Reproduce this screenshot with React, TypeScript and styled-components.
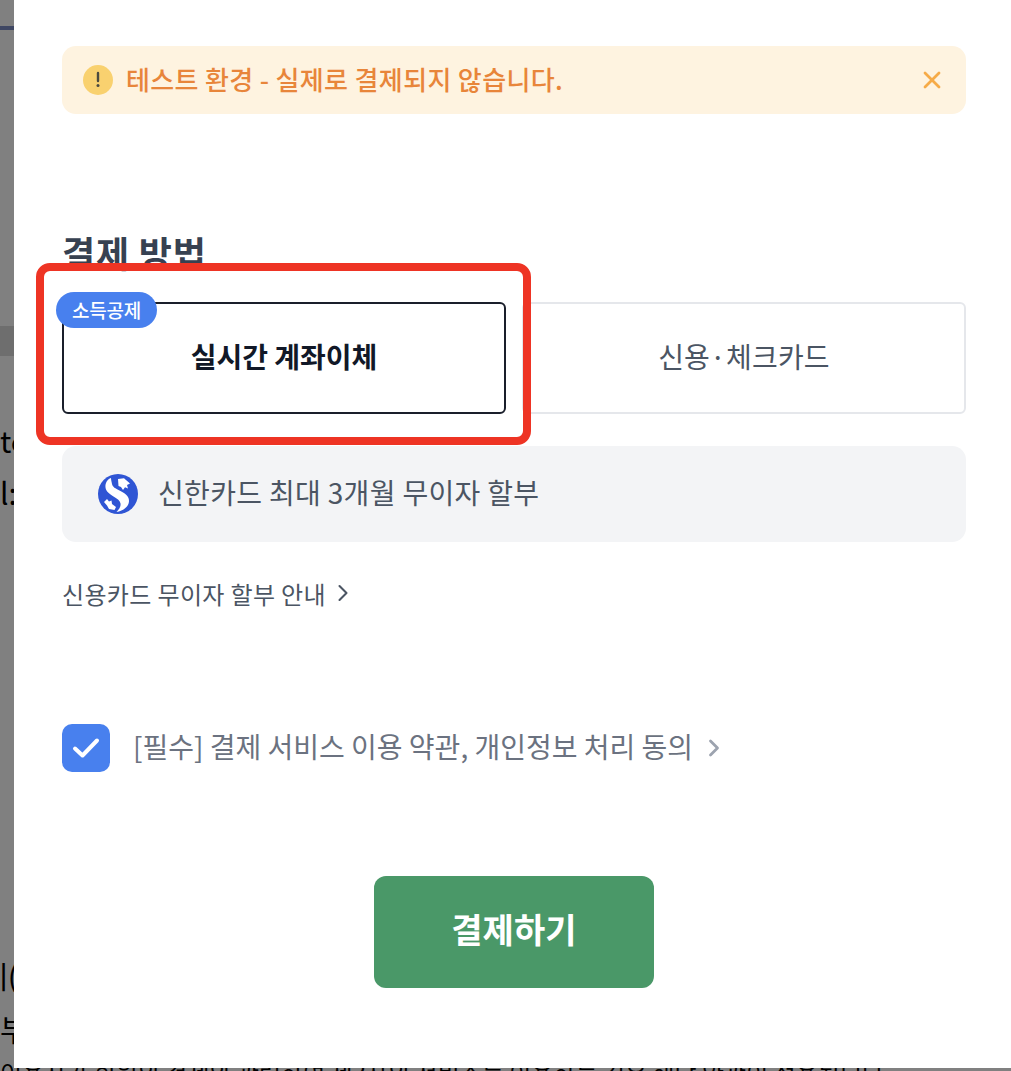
import React from 'react'
import styled, { createGlobalStyle } from 'styled-components'
import { ChevronRight, X } from 'lucide-react'

const GlobalStyle = createGlobalStyle`
  html, body {
    margin: 0;
    padding: 0;
    background: #808080;
  }
  * {
    box-sizing: border-box;
  }
`

const Page = styled.div`
  position: relative;
  width: 1011px;
  height: 1071px;
  overflow: hidden;
  background: #808080;
  font-family: 'Noto Sans CJK KR', 'Noto Sans', sans-serif;
`

const Backdrop = styled.div`
  display: flex;
  flex-direction: column;
  width: 1011px;
  height: 1071px;
  color: #000;
  font-size: 30px;
`

const BackdropRule = styled.div`
  flex: none;
  height: 4px;
  margin-top: 26px;
  background: #3f4763;
`

const BackdropBand = styled.div`
  flex: none;
  height: 30px;
  margin-top: 296px;
  background: #6e6e6e;
`

const BackdropLine = styled.div<{ $gap: number; $tail?: boolean }>`
  flex: none;
  width: ${p => (p.$tail ? 18 : 40)}px;
  height: 34px;
  display: flex;
  justify-content: ${p => (p.$tail ? 'flex-end' : 'flex-start')};
  overflow: hidden;
  line-height: 34px;
  margin-top: ${p => p.$gap}px;
  white-space: nowrap;
`

const BackdropFoot = styled.div`
  flex: none;
  line-height: 24px;
  margin-top: 15px;
  font-size: 24px;
  white-space: nowrap;
`

const Sheet = styled.div`
  position: absolute;
  top: 0;
  left: 14px;
  width: 997px;
  height: 1068px;
  display: flex;
  flex-direction: column;
  padding: 46px 45px 0 48px;
  background: #fff;
`

const Alert = styled.div`
  display: flex;
  align-items: center;
  height: 68px;
  padding: 0 20px 0 21px;
  border-radius: 14px;
  background: #fef3e0;
`

const AlertDot = styled.div`
  width: 30px;
  height: 30px;
  flex: none;
  display: flex;
  align-items: center;
  justify-content: center;
  border-radius: 50%;
  background: #f9d16f;
`

const AlertText = styled.div`
  flex: 1;
  margin-left: 13px;
  padding-bottom: 2px;
  color: #e8853a;
  font-size: 26px;
  font-weight: 500;
  letter-spacing: 0.35px;
  line-height: 34px;
`

const AlertClose = styled.div`
  display: flex;
  color: #f6ab48;
`

const Heading = styled.h2`
  margin: 114px 0 0;
  height: 52px;
  color: #374151;
  font-size: 36px;
  font-weight: 700;
  line-height: 48px;
  letter-spacing: 0.8px;
`

const Tabs = styled.div`
  display: flex;
  gap: 16px;
  margin-top: 22px;
  height: 112px;
`

const Tab = styled.div<{ $active?: boolean }>`
  position: relative;
  display: flex;
  align-items: center;
  justify-content: center;
  flex: 1;
  padding-bottom: 4px;
  border: 2px solid ${p => (p.$active ? '#1a1f2b' : '#e5e7eb')};
  border-radius: 6px;
  color: ${p => (p.$active ? '#111827' : '#4b5563')};
  font-size: 28px;
  font-weight: ${p => (p.$active ? 700 : 400)};
  letter-spacing: ${p => (p.$active ? 0 : 0.2)}px;
`

const Badge = styled.span`
  position: absolute;
  top: -12px;
  left: -8px;
  height: 36px;
  width: 101px;
  display: flex;
  align-items: center;
  justify-content: center;
  padding-bottom: 2px;
  border-radius: 18px;
  background: #4880ee;
  color: #fff;
  font-size: 19px;
  font-weight: 500;
  letter-spacing: -0.2px;
`

const Promo = styled.div`
  display: flex;
  align-items: center;
  height: 96px;
  margin-top: 32px;
  padding: 0 36px;
  border-radius: 14px;
  background: #f3f4f6;
  color: #4b5563;
  font-size: 28px;
  letter-spacing: 0.33px;
`

const PromoText = styled.span`
  margin-left: 20px;
  padding-bottom: 4px;
`

const InfoLink = styled.div`
  display: flex;
  align-items: center;
  gap: 3px;
  height: 36px;
  margin-top: 34px;
  padding-bottom: 2px;
  color: #4b5563;
  font-size: 24px;
  letter-spacing: 0.35px;
`

const Agree = styled.div`
  display: flex;
  align-items: center;
  gap: 23px;
  height: 48px;
  margin-top: 112px;
`

const Check = styled.div`
  width: 48px;
  height: 48px;
  flex: none;
  display: flex;
  align-items: center;
  justify-content: center;
  border-radius: 10px;
  background: #4880ee;
`

const AgreeLabel = styled.div`
  display: flex;
  align-items: center;
  color: #6b7280;
  font-size: 28px;
`

const AgreeText = styled.span`
  padding-bottom: 4px;
`

const AgreeArrow = styled.div`
  display: flex;
  margin-left: 7px;
  color: #9ca3af;
`

const PayButton = styled.div`
  align-self: center;
  width: 280px;
  height: 112px;
  display: flex;
  align-items: center;
  justify-content: center;
  margin-top: 104px;
  padding-bottom: 7px;
  border-radius: 12px;
  background: #4a9868;
  color: #fff;
  font-size: 34px;
  font-weight: 700;
  letter-spacing: 0.1px;
`

const Annotation = styled.div`
  position: absolute;
  top: 263px;
  left: 36px;
  width: 495px;
  height: 182px;
  border: 8px solid #ee3424;
  border-radius: 14px;
  pointer-events: none;
`

function ShinhanMark() {
  return (
    <svg width="40" height="40" viewBox="0 0 40 40" style={{ flex: 'none' }}>
      <circle cx="20" cy="20" r="20" fill="#2f55d4" />
      <path
        d="M13 4C9 5.500 7 9.500 7.500 13.500C8 17.500 11.500 20 15.500 22.500C19.500 25 22 26.500 22.500 29.500C23 32.500 21 35.500 18.500 38C25 37 31 32.500 31 27C31 21.500 26.500 19 21.500 16.500C17.500 14.500 14.500 13 14 10C13.700 8 13 6 13 4Z"
        fill="#fff"
      />
      <path d="M20 5L26 4.300L32 9.500L29 11L30 14.500L27 13.300L25 16L23 13L20.500 12Z" fill="#fff" />
      <path d="M6 28L9 25L11 27.500L13.500 26.500L14 30L18 33L16.500 36L11 35L9 31.500Z" fill="#fff" />
    </svg>
  )
}

export default function App() {
  return (
    <Page>
      <GlobalStyle />
      <Backdrop>
        <BackdropRule />
        <BackdropBand />
        <BackdropLine $gap={67}>te</BackdropLine>
        <BackdropLine $gap={18}>l:</BackdropLine>
        <BackdropLine $gap={449} $tail>
          제(
        </BackdropLine>
        <BackdropLine $gap={19}>부</BackdropLine>
        <BackdropFoot>이용자가 회원의 결제와 관련하여 제3자의 서비스를 이용하는 경우 해당 약관이 적용됩니다</BackdropFoot>
      </Backdrop>
      <Sheet>
        <Alert>
          <AlertDot>
            <svg width="6" height="18" viewBox="0 0 6 18">
              <path d="M3 2v8" stroke="#4b4a3f" strokeWidth="2.400" strokeLinecap="round" />
              <circle cx="3" cy="14.500" r="1.500" fill="#4b4a3f" />
            </svg>
          </AlertDot>
          <AlertText>테스트 환경 - 실제로 결제되지 않습니다.</AlertText>
          <AlertClose>
            <X size={28} strokeWidth={2.400} />
          </AlertClose>
        </Alert>
        <Heading>결제 방법</Heading>
        <Tabs>
          <Tab $active>
            <Badge>소득공제</Badge>
            실시간 계좌이체
          </Tab>
          <Tab>신용·체크카드</Tab>
        </Tabs>
        <Promo>
          <ShinhanMark />
          <PromoText>신한카드 최대 3개월 무이자 할부</PromoText>
        </Promo>
        <InfoLink>
          신용카드 무이자 할부 안내
          <ChevronRight size={28} strokeWidth={1.800} />
        </InfoLink>
        <Agree>
          <Check>
            <svg width="28" height="22" viewBox="0 0 28 22">
              <path d="M3 11.500l7.500 7L25 3.500" fill="none" stroke="#fff" strokeWidth="4" strokeLinecap="round" strokeLinejoin="round" />
            </svg>
          </Check>
          <AgreeLabel>
            <AgreeText>[필수] 결제 서비스 이용 약관, 개인정보 처리 동의</AgreeText>
            <AgreeArrow>
              <ChevronRight size={28} strokeWidth={2.400} />
            </AgreeArrow>
          </AgreeLabel>
        </Agree>
        <PayButton>결제하기</PayButton>
      </Sheet>
      <Annotation />
    </Page>
  )
}
